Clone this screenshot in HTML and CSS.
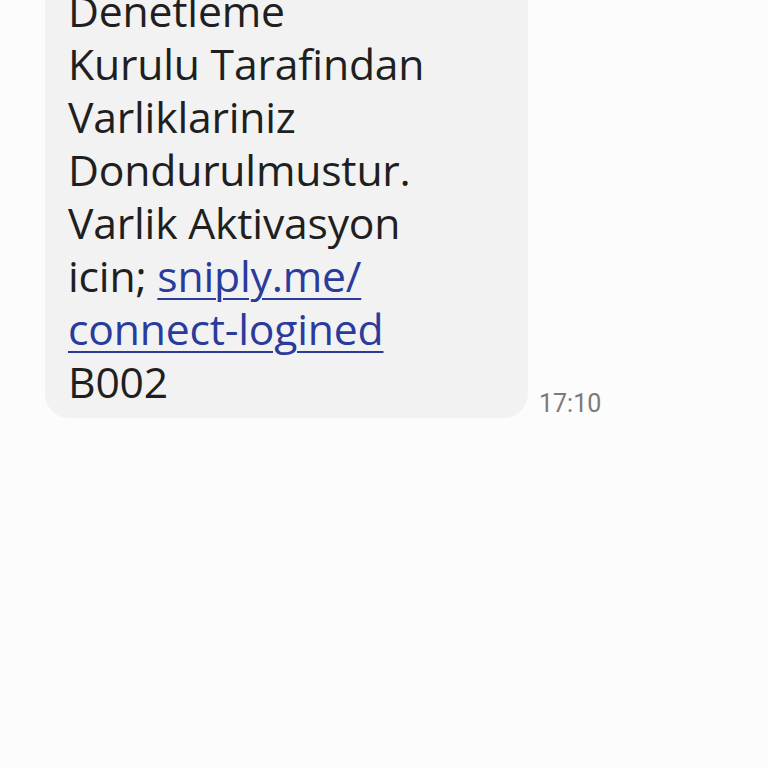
FILE: index.html
```html
<!DOCTYPE html>
<html lang="tr">
<head>
<meta charset="utf-8">
<link rel="stylesheet" href="styles.css">
</head>
<body>
<div class="thread">
  <div class="row">
    <div class="bubble">
      <p class="msg">Denetleme<br>Kurulu Tarafindan<br>Varliklariniz<br>Dondurulmustur.<br>Varlik Aktivasyon<br>icin; <a class="link" href="#">sniply.me/<br>connect-logined</a><br>B002</p>
    </div>
    <span class="time">17:10</span>
  </div>
</div>
</body>
</html>
```
FILE: styles.css
```css
html, body {
  margin: 0;
  padding: 0;
  background: #fcfcfc;
  width: 768px;
  height: 768px;
  overflow: hidden;
}
.thread {
  padding-left: 45px;
}
.row {
  display: flex;
  align-items: flex-end;
  gap: 11px;
}
.bubble {
  width: 483px;
  box-sizing: border-box;
  background: #f2f2f2;
  border-radius: 0 0 24px 24px;
  margin-top: -16px;
  padding: 0 23px 10px 23px;
}
.msg {
  margin: 0;
  font-family: "Open Sans", "Noto Sans", sans-serif;
  font-size: 42.7px;
  line-height: 53px;
  color: #1f1f1f;
  letter-spacing: -0.2px;
}
.link {
  color: #2b3b9c;
  text-decoration: underline;
  text-decoration-thickness: 2px;
  text-underline-offset: 6px;
}
.time {
  font-family: "Roboto", sans-serif;
  font-size: 25px;
  color: #7a7a7a;
  margin-bottom: 0;
}
```
